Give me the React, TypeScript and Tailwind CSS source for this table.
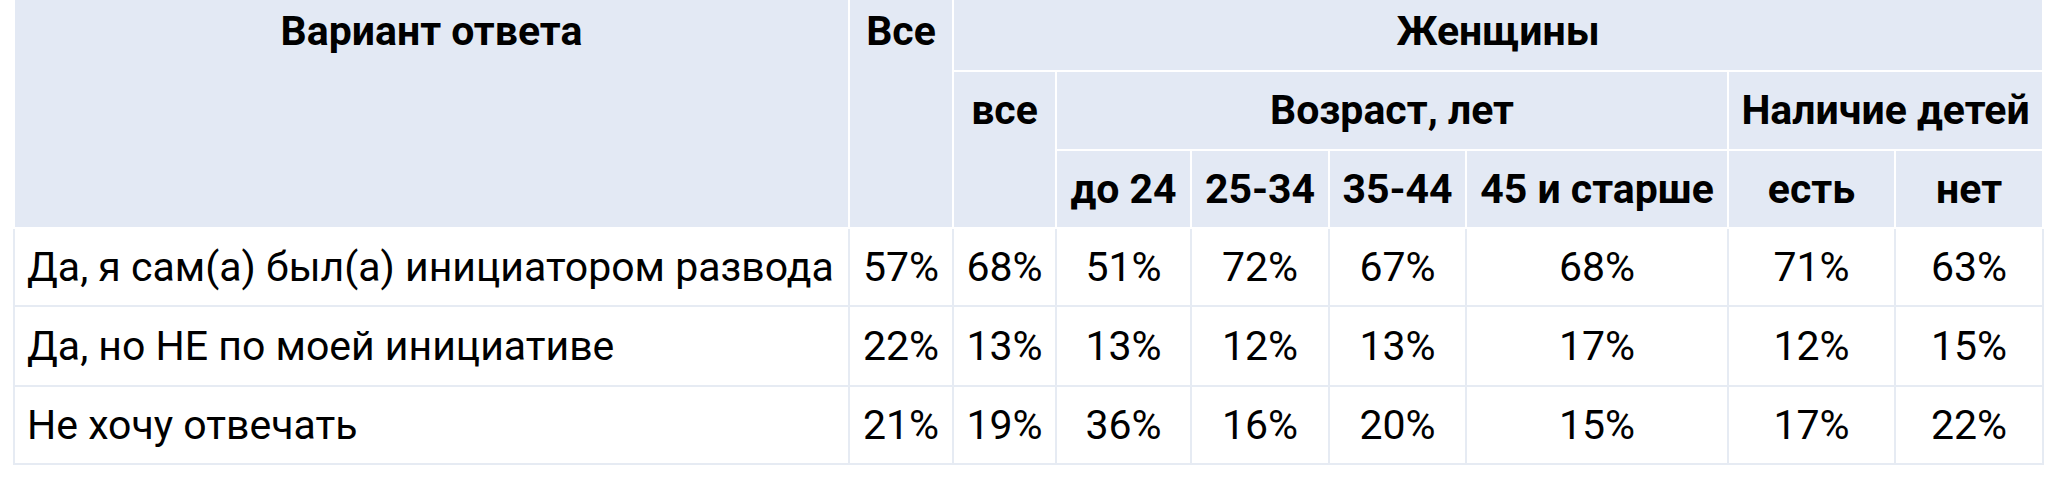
import React from "react";

const rows = [
  ["Да, я сам(а) был(а) инициатором развода", "57%", "68%", "51%", "72%", "67%", "68%", "71%", "63%"],
  ["Да, но НЕ по моей инициативе", "22%", "13%", "13%", "12%", "13%", "17%", "12%", "15%"],
  ["Не хочу отвечать", "21%", "19%", "36%", "16%", "20%", "15%", "17%", "22%"],
];

const widths = [837, 104, 103, 135, 138, 137, 262, 167, 148];

const th = "bg-[#e3e9f4] border-r-2 border-b-2 border-white font-bold text-center p-0";
const td = "bg-white border-r-2 border-b-2 border-[#e6ebf3] text-center align-middle p-0";

export default function App() {
  return (
    <div className="bg-white w-[2048px] h-[481px] overflow-hidden" style={{ fontFamily: "Roboto, 'Noto Sans', sans-serif" }}>
      <table className="table-fixed border-separate border-spacing-0 ml-[13px] -mt-[8px] text-[41px] text-black leading-none w-[2031px]">
        <colgroup>
          {widths.map((w, i) => (
            <col key={i} style={{ width: w }} />
          ))}
        </colgroup>
        <thead>
          <tr className="h-[80px]">
            <th rowSpan={3} className={th + " align-top border-l-2"}>
              <div className="h-[78px] flex items-center justify-center">Вариант ответа</div>
            </th>
            <th rowSpan={3} className={th + " align-top"}>
              <div className="h-[78px] flex items-center justify-center">Все</div>
            </th>
            <th colSpan={7} className={th + " align-middle"}>Женщины</th>
          </tr>
          <tr className="h-[79px]">
            <th rowSpan={2} className={th + " align-top"}>
              <div className="h-[77px] flex items-center justify-center">все</div>
            </th>
            <th colSpan={4} className={th + " align-middle"}>Возраст, лет</th>
            <th colSpan={2} className={th + " align-middle"}>Наличие детей</th>
          </tr>
          <tr className="h-[78px]">
            {["до 24", "25-34", "35-44", "45 и старше", "есть", "нет"].map((t) => (
              <th key={t} className={th + " align-middle"}>{t}</th>
            ))}
          </tr>
        </thead>
        <tbody>
          {rows.map((r, i) => (
            <tr key={i} className={i === 1 ? "h-[80px]" : "h-[78px]"}>
              {r.map((c, j) => (
                <td key={j} className={j === 0 ? td + " text-left pl-[12px] border-l-2" : td}>
                  {c}
                </td>
              ))}
            </tr>
          ))}
        </tbody>
      </table>
    </div>
  );
}
